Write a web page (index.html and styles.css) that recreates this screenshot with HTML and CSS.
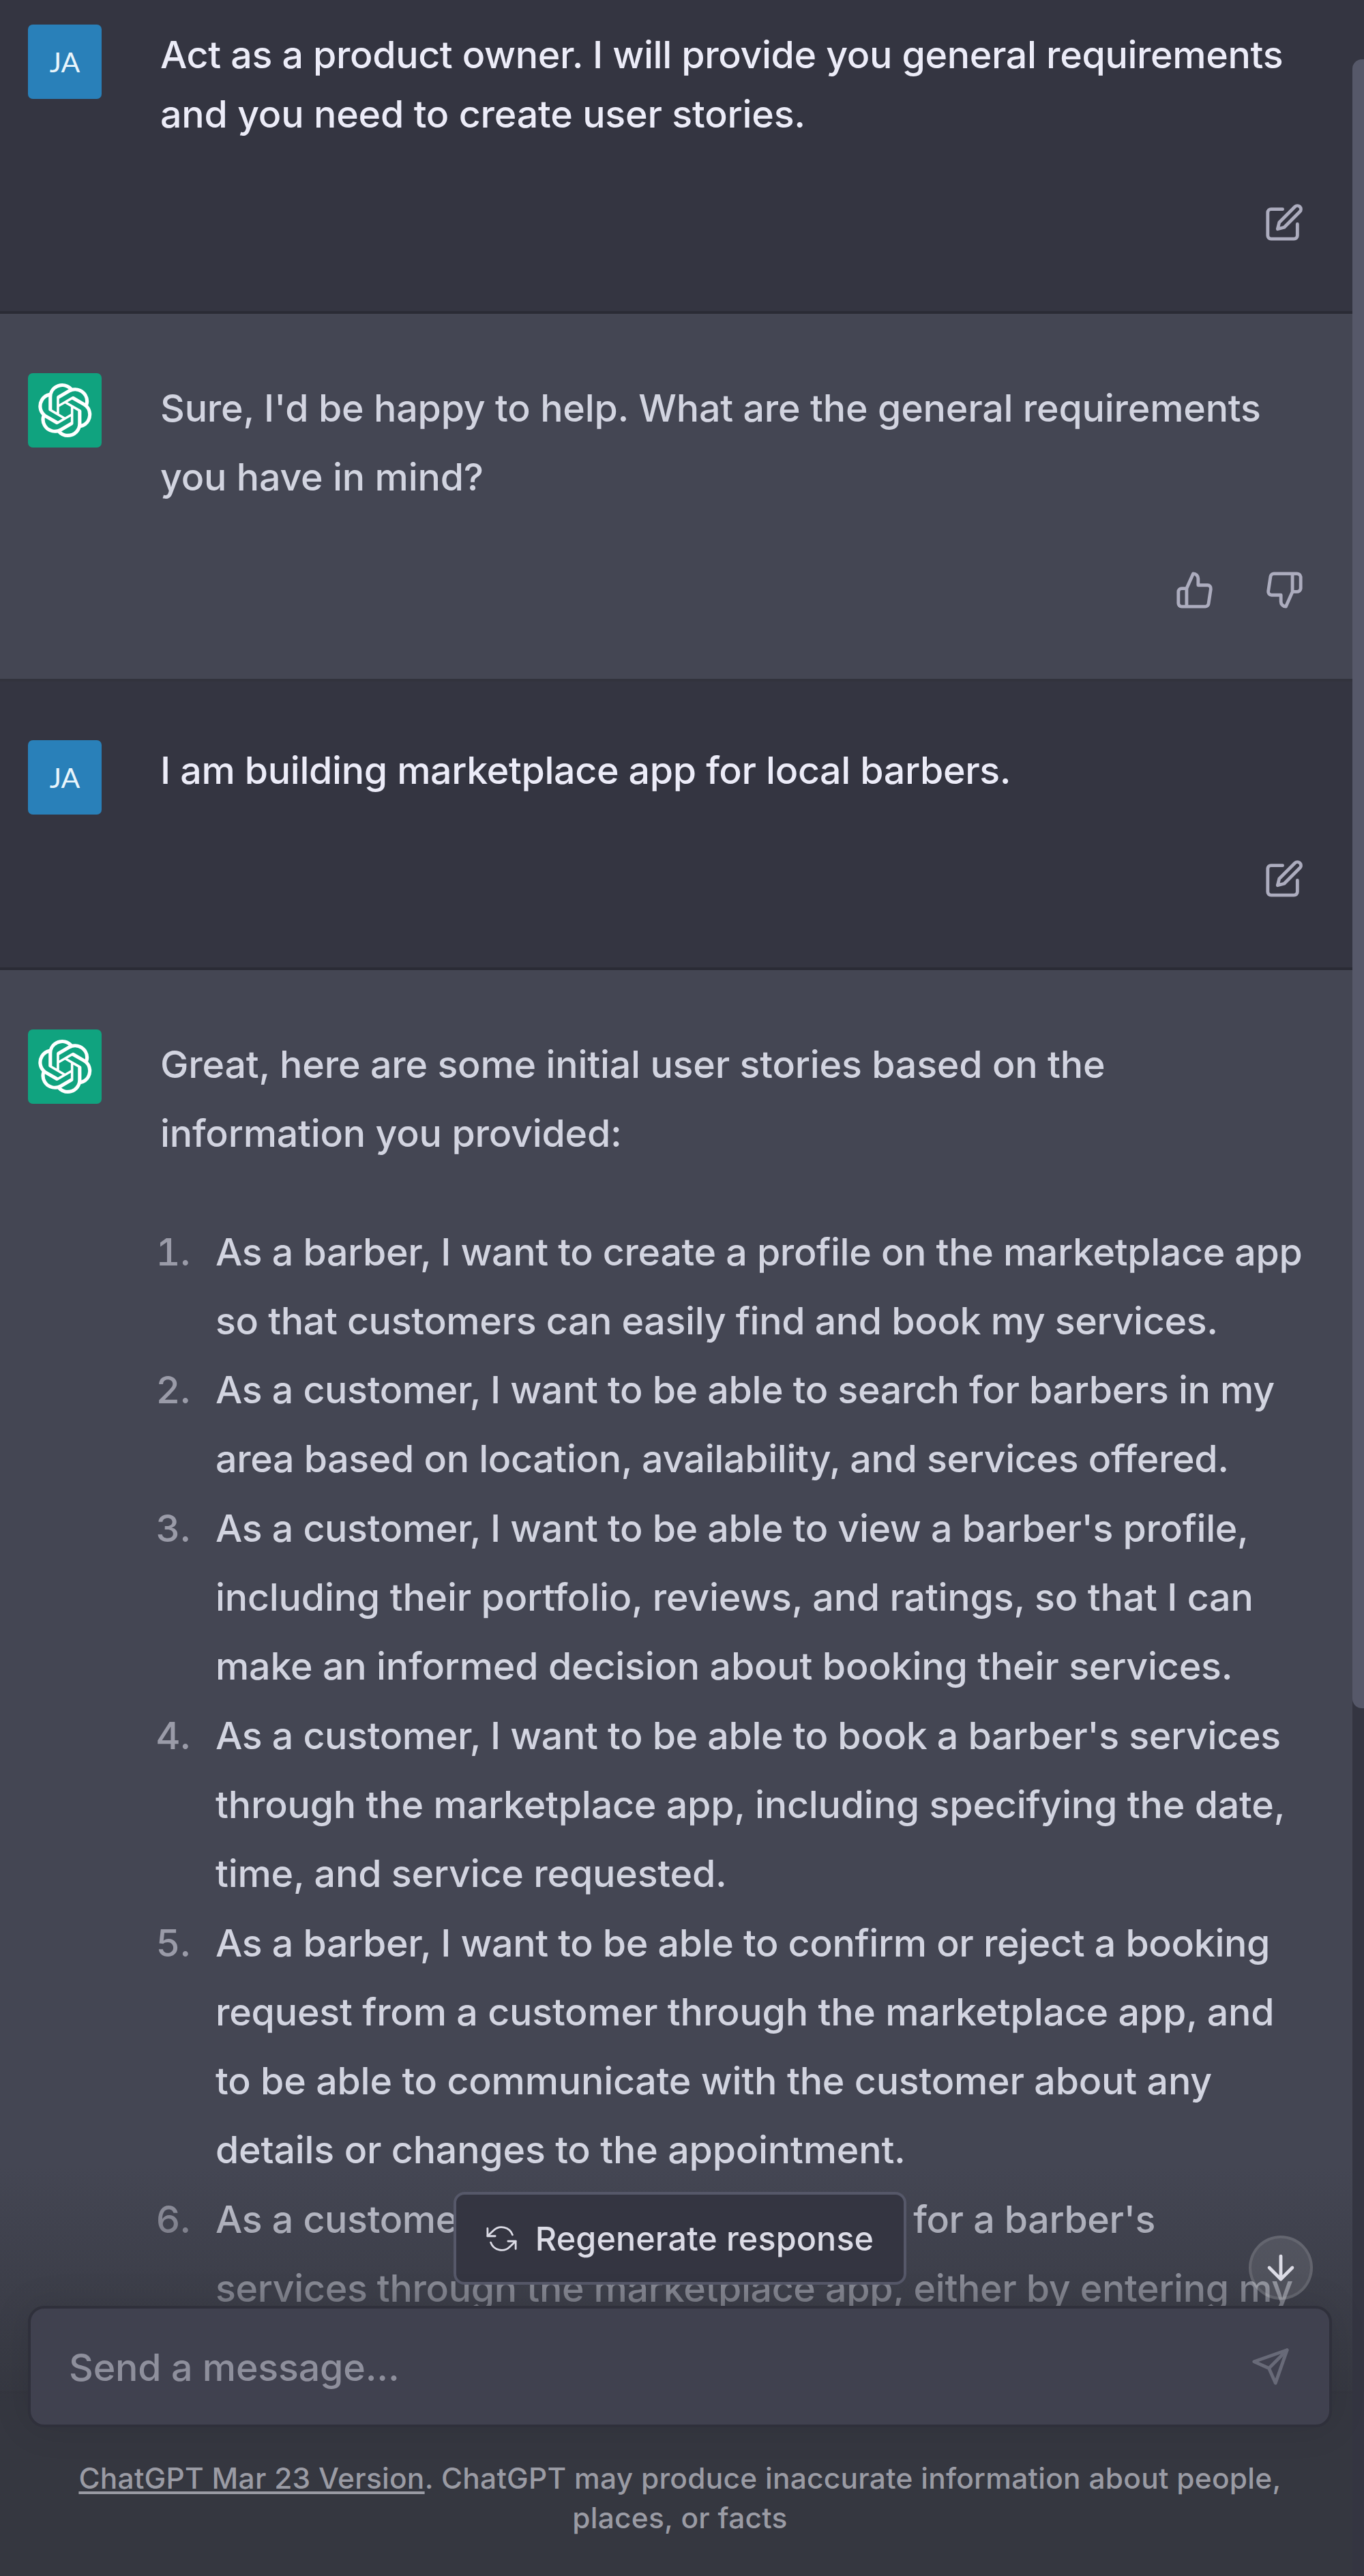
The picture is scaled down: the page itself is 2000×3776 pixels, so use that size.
FILE: index.html
```html
<!DOCTYPE html>
<html lang="en">
<head>
<meta charset="utf-8">
<title>ChatGPT</title>
<link rel="stylesheet" href="styles.css">
</head>
<body>
<svg class="sprite" aria-hidden="true">
  <symbol id="logo" viewBox="0 0 41 41"><path fill="currentColor" d="M37.532 16.87a9.963 9.963 0 0 0-.856-8.184 10.078 10.078 0 0 0-10.855-4.835A9.964 9.964 0 0 0 18.306.5a10.079 10.079 0 0 0-9.614 6.977 9.967 9.967 0 0 0-6.664 4.834 10.08 10.08 0 0 0 1.24 11.817 9.965 9.965 0 0 0 .856 8.185 10.079 10.079 0 0 0 10.855 4.835 9.965 9.965 0 0 0 7.516 3.35 10.078 10.078 0 0 0 9.617-6.981 9.967 9.967 0 0 0 6.663-4.834 10.079 10.079 0 0 0-1.243-11.813ZM22.498 37.886a7.474 7.474 0 0 1-4.799-1.735c.061-.033.168-.091.237-.134l7.964-4.6a1.294 1.294 0 0 0 .655-1.134V19.054l3.366 1.944a.12.12 0 0 1 .066.092v9.299a7.505 7.505 0 0 1-7.49 7.496ZM6.392 31.006a7.471 7.471 0 0 1-.894-5.023c.06.036.162.099.237.141l7.964 4.6a1.297 1.297 0 0 0 1.308 0l9.724-5.614v3.888a.12.12 0 0 1-.048.103l-8.051 4.649a7.504 7.504 0 0 1-10.24-2.744ZM4.297 13.62A7.469 7.469 0 0 1 8.2 10.333c0 .068-.004.19-.004.274v9.201a1.294 1.294 0 0 0 .654 1.132l9.723 5.614-3.366 1.944a.12.12 0 0 1-.114.01L7.04 23.856a7.504 7.504 0 0 1-2.743-10.237Zm27.658 6.437-9.724-5.615 3.367-1.943a.121.121 0 0 1 .113-.01l8.052 4.648a7.498 7.498 0 0 1-1.158 13.528v-9.476a1.293 1.293 0 0 0-.65-1.132Zm3.35-5.043c-.059-.037-.162-.099-.236-.141l-7.965-4.6a1.298 1.298 0 0 0-1.308 0l-9.723 5.614v-3.888a.12.12 0 0 1 .048-.103l8.05-4.645a7.497 7.497 0 0 1 11.135 7.763Zm-21.063 6.929-3.367-1.944a.12.12 0 0 1-.065-.092v-9.299a7.497 7.497 0 0 1 12.293-5.756 6.94 6.94 0 0 0-.236.134l-7.965 4.6a1.294 1.294 0 0 0-.654 1.132l-.006 11.225Zm1.829-3.943 4.33-2.501 4.332 2.5v5l-4.331 2.5-4.331-2.5V18Z"/></symbol>
  <symbol id="edit" viewBox="0 0 24 24"><path d="M11 4H4a2 2 0 0 0-2 2v14a2 2 0 0 0 2 2h14a2 2 0 0 0 2-2v-7"/><path d="M18.5 2.5a2.121 2.121 0 0 1 3 3L12 15l-4 1 1-4 9.5-9.5z"/></symbol>
  <symbol id="up" viewBox="0 0 24 24"><path d="M14 9V5a3 3 0 0 0-3-3l-4 9v11h11.28a2 2 0 0 0 2-1.7l1.38-9a2 2 0 0 0-2-2.3zM7 22H4a2 2 0 0 1-2-2v-7a2 2 0 0 1 2-2h3"/></symbol>
  <symbol id="down" viewBox="0 0 24 24"><path d="M10 15v4a3 3 0 0 0 3 3l4-9V2H5.72a2 2 0 0 0-2 1.7l-1.38 9a2 2 0 0 0 2 2.3zm7-13h2.67A2.31 2.31 0 0 1 22 4v7a2.31 2.31 0 0 1-2.33 2H17"/></symbol>
</svg>

<div class="app">
  <main class="thread">
    <article class="msg msg-user msg-first">
      <div class="avatar avatar-user">JA</div>
      <div class="body">
        <p><span class="snug">Act as a product owner. I will provide you general requirements</span><br>and you need to create user stories.</p>
        <div class="actions"><svg class="icon"><use href="#edit"/></svg></div>
      </div>
    </article>

    <article class="msg msg-bot msg-short">
      <div class="avatar avatar-bot"><svg><use href="#logo"/></svg></div>
      <div class="body">
        <p>Sure, I'd be happy to help. What are the general requirements<br>you have in mind?</p>
        <div class="actions"><svg class="icon"><use href="#up"/></svg><svg class="icon"><use href="#down"/></svg></div>
      </div>
    </article>

    <article class="msg msg-user msg-second">
      <div class="avatar avatar-user">JA</div>
      <div class="body">
        <p><span class="snug">I am building marketplace app for local barbers.</span></p>
        <div class="actions"><svg class="icon"><use href="#edit"/></svg></div>
      </div>
    </article>

    <article class="msg msg-bot">
      <div class="avatar avatar-bot"><svg><use href="#logo"/></svg></div>
      <div class="body">
        <p>Great, here are some initial user stories based on the<br>information you provided:</p>
        <ol class="stories">
          <li><p><span class="snug">As a barber, I want to create a profile on the marketplace app<br>so that customers can easily find and book my services.</span></p></li>
          <li><p><span class="snug">As a customer, I want to be able to search for barbers in my<br>area based on location, availability, and services offered.</span></p></li>
          <li><p><span class="snug">As a customer, I want to be able to view a barber's profile,</span><br>including their portfolio, reviews, and ratings, so that I can<br>make an informed decision about booking their services.</p></li>
          <li><p><span class="snug">As a customer, I want to be able to book a barber's services</span><br>through the marketplace app, including specifying the date,<br>time, and service requested.</p></li>
          <li><p><span class="snug">As a barber, I want to be able to confirm or reject a booking</span><br>request from a customer through the marketplace app, and<br>to be able to communicate with the customer about any<br>details or changes to the appointment.</p></li>
          <li><p><span class="snug">As a customer, I want to be able to pay for a barber's<br>services through the marketplace app, either by entering my</span></p></li>
        </ol>
      </div>
    </article>
  </main>

  <div class="scrollbar"><div class="thumb"></div></div>

  <footer class="dock">
    <button class="regen">
      <svg viewBox="0 0 24 24"><path d="M1 4v6h6M23 20v-6h-6"/><path d="M20.49 9A9 9 0 0 0 5.64 5.64L1 10m22 4l-4.64 4.36A9 9 0 0 1 3.51 15"/></svg>
      <span>Regenerate response</span>
    </button>
    <div class="composer">
      <span>Send a message...</span>
      <svg class="icon" viewBox="0 0 24 24"><path d="M22 2L11 13"/><path d="M22 2l-7 20-4-9-9-4 20-7z"/></svg>
    </div>
    <p class="note"><a>ChatGPT Mar 23 Version</a>. ChatGPT may produce inaccurate information about people,<br>places, or facts</p>
  </footer>

  <button class="to-bottom" aria-label="Scroll to bottom"><svg class="icon" viewBox="0 0 24 24"><path d="M12 5v14M19 12l-7 7-7-7"/></svg></button>
</div>
</body>
</html>
```
FILE: styles.css
```css
* { box-sizing: border-box; }

body {
  margin: 0;
  background: #343541;
  font-family: Inter, "Liberation Sans", sans-serif;
  font-size: 55.5px;
  font-weight: 450;
  letter-spacing: -0.2px;
}

p { margin: 0; white-space: nowrap; }
button { margin: 0; font-family: inherit; }
.sprite { position: absolute; width: 0; height: 0; }

.app {
  position: relative;
  display: flex;
  width: 2000px;
  height: 3776px;
  overflow: hidden;
}

.thread { width: 1983px; }

/* Messages */
.msg {
  display: flex;
  gap: 86px;
  padding: 87px 72px 101px 41px;
  border-bottom: 4px solid #2a2b35;
}
.msg-first { height: 460px; padding-top: 36px; }
.msg-short { height: 539px; }
.msg-second { height: 423px; padding-top: 86px; }
.msg-user { background: #343541; color: #ececf8; line-height: 87px; }
.msg-bot { background: #444653; color: #d2d4e0; line-height: 101.3px; }
.msg-short { border-bottom-color: #32333d; }

.avatar {
  flex: none;
  display: flex;
  align-items: center;
  justify-content: center;
  width: 108px;
  height: 109px;
  border-radius: 7px;
}
.avatar svg { width: 81px; height: 81px; }
.avatar-user {
  background: #2980b9;
  color: #e9f5fb;
  font: 41px Lato, sans-serif;
}
.avatar-bot { background: #10a37f; color: #fff; }

.body {
  flex: 1;
  display: flex;
  flex-direction: column;
}

.snug { letter-spacing: -0.35px; }

.actions {
  display: flex;
  justify-content: flex-end;
  gap: 73px;
  margin-top: auto;
  margin-right: -1px;
  color: #acacbe;
}

.icon {
  width: 58px;
  height: 58px;
  fill: none;
  stroke: currentColor;
  stroke-width: 2;
  stroke-linecap: round;
  stroke-linejoin: round;
}

.stories {
  margin: 72px 0 0;
  padding: 0;
  list-style: none;
  counter-reset: story;
}
.stories li {
  display: flex;
  gap: 37px;
  counter-increment: story;
}
.stories li::before {
  content: counter(story) ".";
  width: 44px;
  display: flex;
  justify-content: flex-end;
  color: #9a9ba8;
  font-variant-numeric: tabular-nums;
}

/* Scrollbar */
.scrollbar { flex: 1; padding-top: 87px; background: #343541; }
.thumb {
  height: 2417px;
  border-radius: 14px 0 0 14px;
  background: #565869;
}

/* Bottom dock over the thread */
.dock {
  position: absolute;
  left: 0;
  bottom: 0;
  width: 1983px;
  height: 600px;
  display: flex;
  flex-direction: column;
  align-items: center;
  padding: 37px 30px 0 41px;
  background: linear-gradient(180deg, rgba(53, 55, 64, 0), #353740 58.85%);
}

.regen {
  display: flex;
  align-items: center;
  justify-content: center;
  gap: 27px;
  width: 664px;
  height: 136px;
  padding: 0;
  border: 4px solid #565869;
  border-radius: 16px;
  background: #343541;
  color: #dcdce6;
  font-size: 48.5px;
  font-weight: 500;
  letter-spacing: 0.1px;
}
.regen svg {
  width: 45px;
  height: 45px;
  fill: none;
  stroke: currentColor;
  stroke-width: 1.5;
  stroke-linecap: round;
  stroke-linejoin: round;
}

.composer {
  display: flex;
  align-items: center;
  justify-content: space-between;
  align-self: stretch;
  height: 178px;
  margin-top: 31px;
  padding: 0 57px 0 56px;
  border: 4px solid #2f303b;
  border-radius: 24px;
  background: #40414f;
  color: #8e8f9c;
  box-shadow: 0 0 54px rgba(0, 0, 0, .1);
}
.composer .icon { color: #686a78; }

.note {
  margin-top: 46px;
  color: #9a9ba4;
  font-size: 42.4px;
  line-height: 58px;
  letter-spacing: 0.28px;
  text-align: center;
}
.note a {
  text-decoration: underline;
  text-decoration-thickness: 4px;
  text-underline-offset: 4px;
}

.to-bottom {
  position: absolute;
  left: 1831px;
  top: 3277px;
  display: flex;
  align-items: center;
  justify-content: center;
  width: 94px;
  height: 94px;
  padding: 0;
  border: 4px solid rgba(255, 255, 255, .1);
  border-radius: 50%;
  background: rgba(255, 255, 255, .1);
  color: #dcdce6;
}
.to-bottom .icon { flex: none; }
```
